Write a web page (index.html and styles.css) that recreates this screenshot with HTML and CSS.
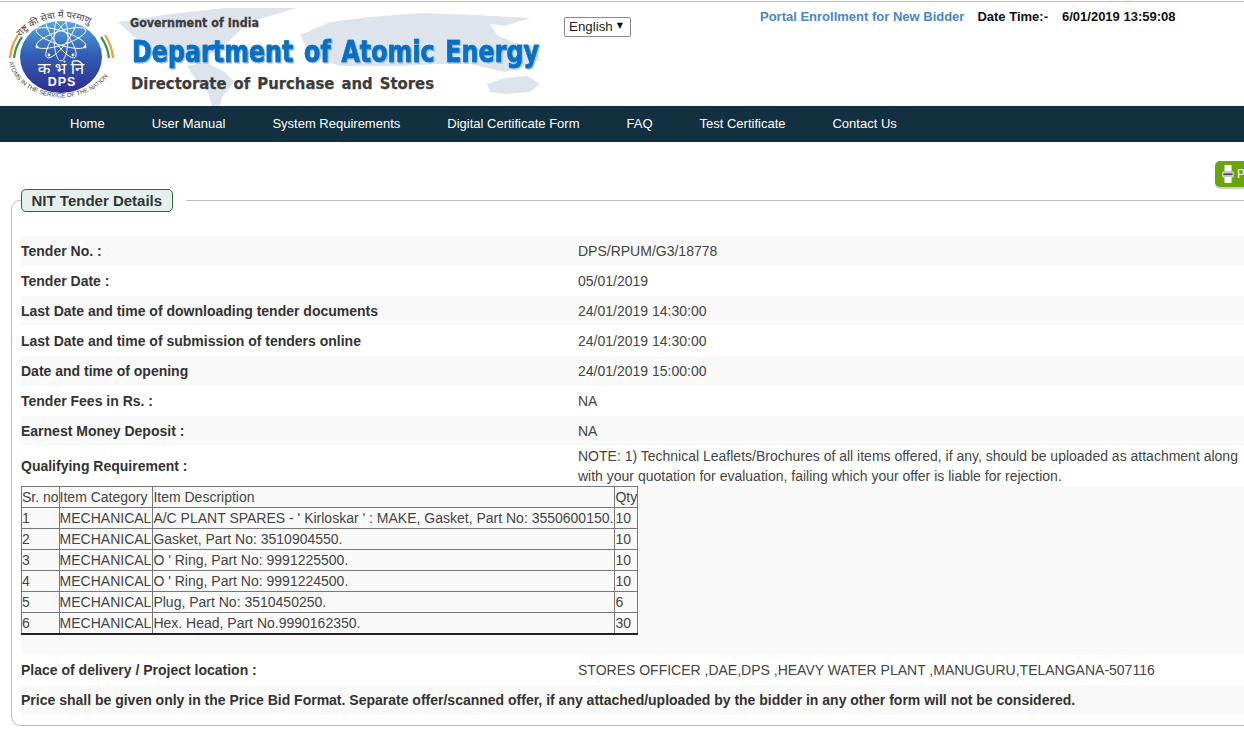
FILE: index.html
```html
<!DOCTYPE html>
<html lang="en">
<head>
<meta charset="utf-8">
<title>NIT Tender Details</title>
<link rel="stylesheet" href="styles.css">
</head>
<body>
<div class="page">
  <header class="masthead">
    <svg class="banner" width="564" height="104" viewBox="0 2 564 104" aria-label="Department of Atomic Energy">
      <g class="map">
        <path d="M118 22 L170 14 L225 8 L297 8 L270 16 L250 22 L235 35 L225 45 L205 58 L170 58 L140 42Z"/>
        <path d="M187 66 L205 62 L225 72 L234 82 L222 97 L220 106 L212 106 L208 92 L196 80Z"/>
        <path d="M300 35 L330 22 L370 17 L420 13 L475 15 L530 18 L505 26 L490 24 L497 35 L515 43 L535 46 L540 60 L520 68 L505 72 L470 64 L440 64 L400 66 L340 66 L310 55Z"/>
        <path d="M487 84 L505 78 L528 76 L540 84 L530 92 L505 94 L490 92Z"/>
      </g>
      <defs>
        <linearGradient id="disc" x1="0" y1="0" x2="0" y2="1">
          <stop offset="0" stop-color="#58a6dc"/><stop offset=".45" stop-color="#3360b4"/><stop offset="1" stop-color="#302c92"/>
        </linearGradient>
        <clipPath id="discClip"><ellipse cx="61" cy="57" rx="41" ry="36"/></clipPath>
        <path id="arcTop" d="M20 37 A58 58 0 0 1 104 35"/>
        <path id="arcBottom" d="M9 62 A53 41 0 0 0 114 62"/>
      </defs>
      <ellipse cx="61" cy="57" rx="41" ry="36" fill="url(#disc)"/>
      <g class="orbit" clip-path="url(#discClip)">
        <ellipse cx="61" cy="38" rx="7" ry="23"/>
        <ellipse cx="61" cy="38" rx="7" ry="24" transform="rotate(36 61 38)"/>
        <ellipse cx="61" cy="38" rx="7" ry="26" transform="rotate(72 61 38)"/>
        <ellipse cx="61" cy="38" rx="7" ry="26" transform="rotate(108 61 38)"/>
        <ellipse cx="61" cy="38" rx="7" ry="24" transform="rotate(144 61 38)"/>
      </g>
      <g class="atoms">
        <circle cx="37" cy="47" r="1.400"/><circle cx="85" cy="47" r="1.400"/><circle cx="49" cy="55" r="1.400"/><circle cx="73" cy="55" r="1.400"/>
      </g>
      <path class="band saffron" d="M10 58 A52 50 0 0 1 18 35"/>
      <path class="band green" d="M14 58 A49 47 0 0 1 22 37"/>
      <path class="band saffron" d="M113 58 A52 50 0 0 0 105 35"/>
      <path class="band green" d="M109 58 A49 47 0 0 0 101 37"/>
      <text class="arc hindi"><textPath href="#arcTop">राष्ट्र की सेवा में परमाणु</textPath></text>
      <text class="arc motto"><textPath href="#arcBottom">ATOMS IN THE SERVICE OF THE NATION</textPath></text>
      <text class="seal-hi" x="61" y="74" text-anchor="middle">क भं नि</text>
      <text class="seal-en" x="62" y="86" text-anchor="middle">DPS</text>
      <text class="gov" x="130" y="27" textLength="129" lengthAdjust="spacingAndGlyphs">Government of India</text>
      <text class="dept" x="132" y="62" textLength="407" lengthAdjust="spacingAndGlyphs">Department of Atomic Energy</text>
      <text class="dir" x="131" y="89" textLength="303" lengthAdjust="spacingAndGlyphs">Directorate of Purchase and Stores</text>
    </svg>
    <div class="lang">
      <div class="lang-box">
        <select class="lang-select"><option>English</option></select>
      </div>
    </div>
    <div class="status">
      <a class="portal" href="#">Portal Enrollment for New Bidder</a>
      <span class="dt-label">Date Time:-</span>
      <span class="dt-value">6/01/2019 13:59:08</span>
    </div>
  </header>

  <nav class="menu">
    <a href="#">Home</a>
    <a href="#">User Manual</a>
    <a href="#">System Requirements</a>
    <a href="#">Digital Certificate Form</a>
    <a href="#">FAQ</a>
    <a href="#">Test Certificate</a>
    <a href="#">Contact Us</a>
  </nav>

  <div class="toolbar">
    <button class="print" type="button">
      <svg width="14" height="20" viewBox="0 0 14 20"><rect x="3.500" y="1" width="7" height="7" fill="#fff"/><rect x="1" y="7" width="12" height="7" rx="2" fill="#c4c6cc"/><rect x="2.500" y="9.500" width="9" height="1.500" fill="#444"/><rect x="3.500" y="13" width="7" height="6" fill="#fff"/></svg>
      Print
    </button>
  </div>

  <fieldset class="panel">
    <legend class="panel-legend"><span class="panel-title">NIT Tender Details</span></legend>
    <div class="rows">
      <div class="row"><b>Tender No. :</b><span>DPS/RPUM/G3/18778</span></div>
      <div class="row"><b>Tender Date :</b><span>05/01/2019</span></div>
      <div class="row"><b>Last Date and time of downloading tender documents</b><span>24/01/2019 14:30:00</span></div>
      <div class="row"><b>Last Date and time of submission of tenders online</b><span>24/01/2019 14:30:00</span></div>
      <div class="row"><b>Date and time of opening</b><span>24/01/2019 15:00:00</span></div>
      <div class="row"><b>Tender Fees in Rs. :</b><span>NA</span></div>
      <div class="row"><b>Earnest Money Deposit :</b><span>NA</span></div>
      <div class="row row-tall"><b>Qualifying Requirement :</b><span>NOTE: 1) Technical Leaflets/Brochures of all items offered, if any, should be uploaded as attachment along with your quotation for evaluation, failing which your offer is liable for rejection.</span></div>
      <div class="row-table">
        <table class="items">
          <tr><td>Sr. no</td><td>Item Category</td><td>Item Description</td><td>Qty</td></tr>
          <tr><td>1</td><td>MECHANICAL</td><td>A/C PLANT SPARES - ' Kirloskar ' : MAKE, Gasket, Part No: 3550600150.</td><td>10</td></tr>
          <tr><td>2</td><td>MECHANICAL</td><td>Gasket, Part No: 3510904550.</td><td>10</td></tr>
          <tr><td>3</td><td>MECHANICAL</td><td>O ' Ring, Part No: 9991225500.</td><td>10</td></tr>
          <tr><td>4</td><td>MECHANICAL</td><td>O ' Ring, Part No: 9991224500.</td><td>10</td></tr>
          <tr><td>5</td><td>MECHANICAL</td><td>Plug, Part No: 3510450250.</td><td>6</td></tr>
          <tr><td>6</td><td>MECHANICAL</td><td>Hex. Head, Part No.9990162350.</td><td>30</td></tr>
        </table>
      </div>
      <div class="row row-plain"><b>Place of delivery / Project location :</b><span>STORES OFFICER ,DAE,DPS ,HEAVY WATER PLANT ,MANUGURU,TELANGANA-507116</span></div>
      <div class="row row-note"><b>Price shall be given only in the Price Bid Format. Separate offer/scanned offer, if any attached/uploaded by the bidder in any other form will not be considered.</b></div>
    </div>
  </fieldset>
</div>
</body>
</html>
```
FILE: styles.css
```css
* { box-sizing: border-box; }
html, body { margin: 0; padding: 0; overflow: hidden; height: 729px; background: #fff; }
body { font-family: "Liberation Sans", Arial, sans-serif; font-size: 14px; color: #444; }
.page { width: 1300px; padding-top: 1px; }

.masthead { display: flex; align-items: flex-start; height: 105px; border-top: 1px solid #bdbdbd; }
.banner { flex: none; display: block; }
.map path { fill: #dde4ec; }
.orbit ellipse { fill: none; stroke: #fff; stroke-width: .9; }
.atoms circle { fill: #fff; }
.band { fill: none; stroke-width: 2.200; }
.saffron { stroke: #ef9a3c; }
.green { stroke: #2e9a4a; }
.arc { fill: #444; font-family: "Noto Sans", "DejaVu Sans", sans-serif; }
.hindi { font-size: 9.500px; }
.motto { font-size: 6.200px; font-family: "Liberation Sans", sans-serif; }
.seal-hi { fill: #fff; font-size: 16.500px; font-family: "Noto Sans", "DejaVu Sans", sans-serif; }
.seal-en { fill: #fff; font-size: 12.500px; font-weight: 700; font-family: "Liberation Sans", sans-serif; letter-spacing: 1px; }
.gov { font: 700 12.500px "DejaVu Sans", sans-serif; fill: #3c3c3c; stroke: #3c3c3c; stroke-width: .3px; }
.dir { font: 700 16px "DejaVu Sans", sans-serif; fill: #3c3c3c; stroke: #3c3c3c; stroke-width: .25px; word-spacing: 2px; }
.dept { font: 700 30px "DejaVu Sans", sans-serif; fill: #0a6fc2; stroke: #0a6fc2; stroke-width: .7px; word-spacing: 3px; filter: drop-shadow(0 0 .6px #8fc4ec) drop-shadow(0 0 .6px #8fc4ec) drop-shadow(1px 1px 0 #a9c4dc); }

.lang { flex: none; width: 196px; padding-top: 15px; }
.lang-box { position: relative; width: 67px; height: 20px; }
.lang-box::after { content: "▼"; position: absolute; right: 8px; top: 4px; font: 8px "DejaVu Sans", sans-serif; color: #111; pointer-events: none; }
.lang-select { appearance: none; -webkit-appearance: none; width: 100%; height: 100%; padding: 0 0 2px 4px; font: 13.333px "Liberation Sans", sans-serif; color: #222; background: #fff; border: 1px solid #8a8a8a; border-radius: 2px; }
.status { flex: none; display: flex; padding-top: 7px; font-size: 13px; font-weight: 700; color: #111; line-height: 15px; }
.portal { color: #4a86c8; text-decoration: none; margin-right: 13px; }
.dt-label { margin-right: 14px; }

.menu { display: flex; height: 36px; padding: 0 0 2px 46.500px; align-items: center; background: #12303f; }
.menu a { padding: 0 23.500px; color: #fff; font-size: 13px; text-decoration: none; }

.toolbar { height: 47px; padding: 19px 0 0 1215px; }
.print { display: flex; align-items: center; gap: 2px; width: 70px; height: 26px; padding: 0 0 0 6px; background: #6aa30e; color: #fff; border: 0; border-radius: 5px; box-shadow: 0 2px 1px #ccc; font: 12px "Liberation Sans", sans-serif; }

.panel { margin: 0 0 0 11px; padding: 0 0 9px 9px; width: 1289px; height: 537px; border: 1px solid #bdbdbd; border-radius: 9px; }
.panel-legend { padding: 0 13px 0 0; height: 23px; }
.panel-title { display: block; padding: 0 9.500px; height: 23px; line-height: 21px; background: #e4f0ee; border: 1px solid #2b6b2f; border-radius: 5px; font-size: 15px; font-weight: 700; color: #333; }

.rows { padding-top: 24px; }
.row { display: grid; grid-template-columns: 557px 670px; align-items: center; height: 30px; line-height: 20px; }
.row:nth-child(odd) { background: #f9f9f9; }
.row b { color: #333; }
.row-tall { height: 40px; }
.row-table { height: 169px; background: #f9f9f9; }
.row-plain { background: #fff; }
.row-note { display: block; padding-top: 5px; }

.items { border-collapse: collapse; border: 1px solid #222; border-bottom-width: 2px; line-height: 18px; }
.items td { padding: 1px 0; height: 21px; border: 1px solid #777; white-space: nowrap; }
.items td:nth-child(2), .items td:nth-child(3) { padding-right: 1px; }
```
